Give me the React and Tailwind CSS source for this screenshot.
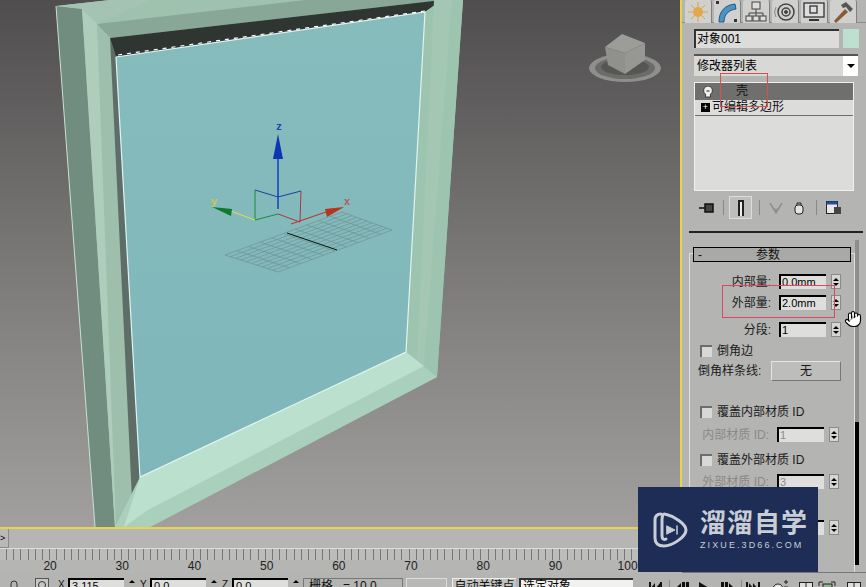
import { Hand } from 'lucide-react'

const LABELS = [20, 30, 40, 50, 60, 70, 80, 90, 100]
const TICKS = Array.from({ length: 93 })

function lerp(a, b, t) {
  return [a[0] + (b[0] - a[0]) * t, a[1] + (b[1] - a[1]) * t]
}

function GroundGrid() {
  const left = [225, 255]
  const bottom = [278, 272]
  const right = [392, 230]
  const top = [342, 212]
  const lines = []
  for (let i = 0; i <= 10; i++) {
    const a = lerp(left, bottom, i / 10)
    const b = lerp(top, right, i / 10)
    lines.push([a, b])
    const c = lerp(left, top, i / 10)
    const d = lerp(bottom, right, i / 10)
    lines.push([c, d])
  }
  return (
    <g stroke="#6f9393" strokeWidth="0.7">
      {lines.map(([a, b], i) => (
        <line key={i} x1={a[0]} y1={a[1]} x2={b[0]} y2={b[1]} />
      ))}
    </g>
  )
}

function Scene() {
  return (
    <svg viewBox="0 0 680 527" className="block w-[680px] h-[527px]">
      <defs>
        <linearGradient id="bg" x1="0" y1="0" x2="0" y2="1">
          <stop offset="0" stopColor="#4f4d4d" />
          <stop offset="0.5" stopColor="#7b7978" />
          <stop offset="1" stopColor="#a2a09e" />
        </linearGradient>
        <linearGradient id="glass" x1="0" y1="0" x2="0" y2="1">
          <stop offset="0" stopColor="#86bcbc" />
          <stop offset="1" stopColor="#7fb6ba" />
        </linearGradient>
      </defs>
      <rect width="680" height="527" fill="url(#bg)" />

      {/* frame */}
      <polygon points="56,6 82,9 115,527 95,527" fill="#718d80" />
      <polygon points="56,6 110,0 463,0 437,377 150,527 115,527 82,9" fill="#9fc2ae" />
      <polygon points="56,6 110,0 150,0 97,24 82,9" fill="#a5c3b3" />
      <polygon points="97,24 305,0 442,0 110,38" fill="#89a797" />
      <polygon points="82,9 97,24 135,527 115,527" fill="#aecdbb" />
      <polygon points="97,24 110,38 140,477 116,527" fill="#9dbfac" />
      <polygon points="110,38 116,57 140,477 132,500" fill="#5f6d68" />
      <polygon points="110,38 442,0 425,12 116,57" fill="#2f3531" />
      <polygon points="425,12 442,0 463,0 437,377 406,352" fill="#9dc4ae" />
      <polygon points="434,0 452,0 424,366 417,360" fill="#a3c7b3" />
      <polygon points="140,477 406,352 437,377 150,527 115,527" fill="#a9d0bb" />
      <polygon points="140,477 406,352 424,366 148,510 124,527" fill="#bbe0ce" />
      <polygon points="116,57 425,12 406,352 140,477" fill="url(#glass)" />
      <polyline points="116,57 425,12 406,352 140,477 116,57" fill="none" stroke="#dff4f2" strokeWidth="1.2" />
      <polyline points="56,6 95,527" fill="none" stroke="#c6e2d4" strokeWidth="1" />
      <line x1="118" y1="55" x2="425" y2="11" stroke="#fff" strokeWidth="1.2" strokeDasharray="4 5" />

      {/* grid and gizmo */}
      <GroundGrid />
      <line x1="287" y1="233" x2="337" y2="250" stroke="#111" strokeWidth="1" />
      <g fill="none" strokeWidth="1">
        <polyline points="255,190 278,197 301,191" stroke="#1b3fa0" />
        <line x1="255" y1="190" x2="255" y2="220" stroke="#1c8a3c" />
        <line x1="301" y1="191" x2="300" y2="222" stroke="#a83a40" />
        <line x1="255" y1="220" x2="278" y2="214" stroke="#1c8a3c" />
        <line x1="278" y1="214" x2="300" y2="222" stroke="#a83a40" />
        <line x1="255" y1="220" x2="228" y2="210" stroke="#d8d860" strokeWidth="1.2" />
        <line x1="291" y1="224" x2="326" y2="212" stroke="#b83a30" strokeWidth="1.2" />
        <line x1="278" y1="158" x2="278" y2="209" stroke="#1040c0" strokeWidth="1.5" />
      </g>
      <polygon points="278,134 283,159 273,159" fill="#0c36b4" />
      <polygon points="212,207 232,209 231,216" fill="#0e7a2c" />
      <polygon points="344,207 325,209 327,217" fill="#b8341f" />
      <text x="279" y="130" textAnchor="middle" fontSize="11" fontWeight="700" fill="#1a44b8" fontFamily="Liberation Sans">z</text>
      <text x="347" y="205" textAnchor="middle" fontSize="11" fontWeight="700" fill="#b85a5a" fontFamily="Liberation Sans">x</text>
      <text x="214" y="205" textAnchor="middle" fontSize="11" fontWeight="700" fill="#c8c860" fontFamily="Liberation Sans">y</text>

      {/* view cube */}
      <ellipse cx="625" cy="68" rx="36" ry="14" fill="#8f8f8c" />
      <ellipse cx="625" cy="68" rx="30" ry="11" fill="#6b6b69" />
      <ellipse cx="625" cy="67" rx="24" ry="8" fill="#565654" />
      <polygon points="622,34 645,43 625,53 605,47" fill="#9c9c98" />
      <polygon points="605,47 625,53 625,74 608,65" fill="#90908c" />
      <polygon points="625,53 645,43 645,60 625,74" fill="#979793" />
    </svg>
  )
}

function Ruler() {
  return (
    <div className="h-[44px] bg-[#b5b5b3] flex flex-col">
      <div className="h-[19px] flex">
        <div className="w-[9px] h-[19px] bg-[#b9b9b7] border-r border-b border-[#8a8a88] text-[9px] leading-[19px] text-black">&gt;</div>
      </div>
      <div className="h-[12px] border-t border-[#dededc] bg-[#bcbcba] flex pl-[6px]">
        {TICKS.map((_, i) => (
          <div key={i} className="w-[7.2px] h-[11px] shrink-0 border-l border-[#77777a]" />
        ))}
      </div>
      <div className="h-[13px] flex pl-[14px] text-[12px] leading-[13px] text-[#222]">
        {LABELS.map((n) => (
          <div key={n} className="w-[72.2px] shrink-0 text-center">{n}</div>
        ))}
      </div>
    </div>
  )
}

function TabIcon({ name }) {
  if (name === 'create') {
    return (
      <svg viewBox="0 0 22 22" className="w-[22px] h-[22px]">
        <g stroke="#d9a83c" strokeWidth="1">
          <line x1="11" y1="1" x2="11" y2="21" />
          <line x1="1" y1="11" x2="21" y2="11" />
          <line x1="4" y1="4" x2="18" y2="18" />
          <line x1="18" y1="4" x2="4" y2="18" />
        </g>
        <circle cx="11" cy="11" r="5" fill="#e2a850" />
      </svg>
    )
  }
  if (name === 'modify') {
    return (
      <svg viewBox="0 0 22 22" className="w-[22px] h-[22px]">
        <path d="M3 21 C3 10 9 4 19 3 L20 8 C13 9 8 13 8 21 Z" fill="#4b93c4" stroke="#27587c" />
        <rect x="0" y="0" width="3" height="3" fill="#333" />
        <rect x="18" y="18" width="3" height="3" fill="#333" />
      </svg>
    )
  }
  if (name === 'hierarchy') {
    return (
      <svg viewBox="0 0 22 22" className="w-[22px] h-[22px]" fill="none" stroke="#444" strokeWidth="1">
        <rect x="7" y="1" width="8" height="7" fill="#ddd" />
        <path d="M11 8v4M4 12h14M4 12v3M11 12v3M18 12v3" />
        <rect x="1" y="15" width="6" height="5" fill="#ddd" />
        <rect x="8" y="15" width="6" height="5" fill="#ddd" />
        <rect x="15" y="15" width="6" height="5" fill="#ddd" />
      </svg>
    )
  }
  if (name === 'motion') {
    return (
      <svg viewBox="0 0 22 22" className="w-[22px] h-[22px]" fill="none" stroke="#444">
        <circle cx="12" cy="11" r="8" strokeWidth="1.5" />
        <circle cx="12" cy="11" r="4" strokeWidth="1.5" />
        <circle cx="12" cy="11" r="1.5" fill="#444" />
        <path d="M2 6a10 10 0 0 0 0 10" stroke="#888" />
      </svg>
    )
  }
  if (name === 'display') {
    return (
      <svg viewBox="0 0 22 22" className="w-[22px] h-[22px]" fill="none" stroke="#333" strokeWidth="1.3">
        <rect x="1" y="2" width="20" height="14" fill="#ddd" />
        <rect x="7" y="5" width="7" height="7" />
        <path d="M6 19h10" strokeWidth="2" />
      </svg>
    )
  }
  return (
    <svg viewBox="0 0 22 22" className="w-[22px] h-[22px]">
      <path d="M2 20 L13 8 L16 11 L4 22 Z" fill="#8a5a34" />
      <path d="M9 4 L14 1 L21 8 L18 11 L14 6 L11 7 Z" fill="#555" />
    </svg>
  )
}

function Tabs() {
  return (
    <div className="h-[23px] flex gap-[2px] pl-[3px] border-b border-[#8c8c8a]">
      {['create', 'modify', 'hierarchy', 'motion', 'display', 'utility'].map((t) => (
        <div key={t} className="w-[27px] h-[23px] bg-[#d0d0ce] border-r border-[#808080] rounded-t-[2px] flex items-center justify-center">
          <TabIcon name={t} />
        </div>
      ))}
    </div>
  )
}

function Spinner() {
  return (
    <div className="w-[10px] h-[15px] flex flex-col bg-[#d6d6d4] border border-[#8a8a88] items-center justify-center gap-[2px]">
      <div className="w-0 h-0 border-x-[3px] border-x-transparent border-b-[3px] border-b-black" />
      <div className="w-0 h-0 border-x-[3px] border-x-transparent border-t-[3px] border-t-black" />
    </div>
  )
}

function NumField({ label, value, disabled, gap = 'gap-[5px]', right = 'pr-[13px]' }) {
  const labelColor = disabled ? 'text-[#8a8a88]' : 'text-[#1a1a1a]'
  const valueColor = disabled ? 'text-[#8c8c8a]' : 'text-black'
  return (
    <div className={`flex items-center justify-end ${right} ${gap} h-[15px]`}>
      <span className={`text-[12px] mr-[3px] ${labelColor}`}>{label}</span>
      <div className={`w-[47px] h-[15px] bg-[#dededc] border-t-2 border-l-2 border-t-black border-l-black pl-[1px] text-[11px] leading-[13px] ${valueColor}`}>{value}</div>
      <Spinner />
    </div>
  )
}

function CheckRow({ label }) {
  return (
    <div className="flex items-center gap-[5px] pl-[10px] h-[14px] text-[12px] text-[#1a1a1a]">
      <div className="w-[12px] h-[12px] bg-[#d8d8d6] border-t-2 border-l-2 border-[#6d6d6b]" />
      <span>{label}</span>
    </div>
  )
}

function ModifierStack() {
  return (
    <div className="mx-[12px] mt-[6px] w-[160px] h-[109px] bg-[#dcdcda] border border-[#f0f0ee] text-[12px] text-[#111]">
      <div className="h-[17px] bg-[#6f6f6d] flex items-center pl-[8px]">
        <svg viewBox="0 0 10 12" className="w-[10px] h-[12px]">
          <path d="M5 0a4.5 4.5 0 0 1 2.5 8.2V11h-5V8.2A4.5 4.5 0 0 1 5 0z" fill="#f0f0ee" stroke="#222" strokeWidth="0.8" />
          <path d="M3.5 5h3" stroke="#222" />
        </svg>
        <span className="ml-[23px] leading-[17px]">壳</span>
      </div>
      <div className="h-[16px] border-b border-[#6f6f6d] flex items-center pl-[6px]">
        <div className="w-[9px] h-[9px] bg-black text-white text-[9px] leading-[9px] text-center">+</div>
        <span className="ml-[2px] leading-[15px]">可编辑多边形</span>
      </div>
    </div>
  )
}

function StackTools() {
  return (
    <div className="h-[21px] mt-[6px] flex items-center pl-[17px]">
      <svg viewBox="0 0 16 12" className="w-[16px] h-[12px]">
        <path d="M0 6h6M6 2h8v8H6z" stroke="#111" strokeWidth="1.5" fill="#444" />
      </svg>
      <div className="w-px h-[15px] bg-[#888] ml-[8px]" />
      <div className="w-[23px] h-[23px] ml-[5px] border border-[#ddd] bg-[#bebebc] flex justify-center items-center">
        <div className="w-[6px] h-[16px] border-x-2 border-t-2 border-[#222] bg-[#eee]" />
      </div>
      <div className="w-px h-[15px] bg-[#888] ml-[7px]" />
      <svg viewBox="0 0 14 14" className="w-[14px] h-[14px] ml-[9px]" fill="none" stroke="#8f8f8d" strokeWidth="1.5">
        <path d="M1 2l6 10 6-10M4 7l3 2 3-2" />
      </svg>
      <svg viewBox="0 0 12 14" className="w-[12px] h-[14px] ml-[10px]" fill="#e4e4e2" stroke="#222">
        <rect x="2" y="4" width="8" height="9" rx="3" />
        <path d="M4 4V2h4v2" fill="none" />
      </svg>
      <div className="w-px h-[15px] bg-[#888] ml-[11px]" />
      <svg viewBox="0 0 15 14" className="w-[15px] h-[14px] ml-[9px]">
        <rect x="0.5" y="0.5" width="11" height="12" fill="#e8e8e6" stroke="#223" />
        <rect x="0.5" y="0.5" width="11" height="3" fill="#2a4a9c" />
        <rect x="8" y="6" width="7" height="7" fill="#444" />
      </svg>
    </div>
  )
}

function ParamsRollout() {
  return (
    <div className="relative mt-[20px] ml-[7px] w-[166px] h-[330px] border-l border-t border-r border-[#e0e0de]">
      <div className="ml-[3px] -mt-[7px] w-[158px] h-[15px] border border-black bg-[#a9a9a7] flex items-center text-[12px] text-[#111]">
        <span className="pl-[4px] w-[50px]">-</span>
        <span className="ml-[12px]">参数</span>
      </div>
      <div className="mt-[12px]"><NumField label="内部量:" value="0.0mm" /></div>
      <div className="mt-[6px]"><NumField label="外部量:" value="2.0mm" /></div>
      <div className="mt-[12px]"><NumField label="分段:" value="1" /></div>
      <div className="mt-[7px]"><CheckRow label="倒角边" /></div>
      <div className="mt-[2px] flex items-center pl-[8px] h-[21px] text-[12px] text-[#1a1a1a]">
        <span className="w-[73px]">倒角样条线:</span>
        <div className="w-[70px] h-[20px] bg-[#bdbdbb] border border-t-[#e4e4e2] border-l-[#e4e4e2] border-r-[#777] border-b-[#777] text-center leading-[18px]">无</div>
      </div>
      <div className="mt-[24px]"><CheckRow label="覆盖内部材质 ID" /></div>
      <div className="mt-[8px]"><NumField label="内部材质 ID:" value="1" disabled right="pr-[15px]" /></div>
      <div className="mt-[11px]"><CheckRow label="覆盖外部材质 ID" /></div>
      <div className="mt-[7px]"><NumField label="外部材质 ID:" value="3" disabled right="pr-[15px]" /></div>
      <div className="mt-[31px]"><NumField label="" value="" right="pr-[15px]" /></div>
    </div>
  )
}

function Sidebar() {
  return (
    <div className="relative w-[184px] h-[573px] bg-[#b4b4b2] overflow-hidden border-b border-[#777]">
      <Tabs />
      <div className="flex items-center pl-[12px] mt-[6px] gap-[4px]">
        <div className="w-[145px] h-[19px] bg-[#dcdcda] border-t-2 border-l-2 border-t-[#333] border-l-[#333] text-[12px] leading-[16px] pl-[1px] text-black">对象001</div>
        <div className="w-[16px] h-[19px] bg-[#bfe0d0]" />
      </div>
      <div className="flex mt-[6px] ml-[12px] w-[164px] h-[22px] bg-[#d8d8d6] border-t-2 border-[#555]">
        <div className="flex-1 text-[12px] leading-[20px] pl-[3px] text-black">修改器列表</div>
        <div className="w-[15px] bg-white flex items-center justify-center">
          <div className="w-0 h-0 border-x-[4px] border-x-transparent border-t-[4px] border-t-black" />
        </div>
      </div>
      <ModifierStack />
      <StackTools />
      <div className="mt-[13px] ml-[7px] w-[174px] h-[2px] bg-[#222]" />
      <ParamsRollout />
      {/* scrollbar */}
      <div className="absolute left-[173px] top-[240px] w-[4px] h-[325px] flex flex-col">
        <div className="h-[182px] bg-[#8e8e8c]" />
        <div className="flex-1 bg-black" />
      </div>
    </div>
  )
}

function Transport() {
  return (
    <svg viewBox="0 0 218 14" className="w-[218px] h-[14px] ml-[14px] mt-[6px] shrink-0">
      <g fill="#111">
        <path d="M2 3h2v11H2zM13 3h2v11h-2zM4 9l4-5v10zM9 9l4-5v10z" />
        <rect x="22" y="1" width="1" height="13" fill="#888" />
        <path d="M29 9l5-5v10zM35 3h3v11h-3zM39 3h3v11h-3z" />
        <path d="M52 3l10 6-10 6z" />
        <path d="M74 3h3v11h-3zM78 3h3v11h-3zM82 4l5 5-5 5z" />
        <rect x="94" y="1" width="1" height="13" fill="#888" />
        <path d="M99 3h2v11h-2zM111 3h2v11h-2zM102 4l4 5-4 5zM106 4l4 5-4 5z" />
      </g>
      <g fill="none" stroke="#222">
        <circle cx="131" cy="10" r="5" fill="#e6e6e4" />
        <path d="M137 3h4M139 1v4M137 8h4" />
        <rect x="152.5" y="3.5" width="13" height="11" fill="#dededc" />
        <path d="M159 3v11" />
        <path d="M172 7V3h4M184 3h4v4" />
        <rect x="176" y="5" width="9" height="8" fill="#8db58f" />
        <rect x="200.5" y="3.5" width="13" height="11" fill="#dededc" />
        <path d="M207 3v11" />
      </g>
    </svg>
  )
}

function CoordField({ label, value }) {
  return (
    <div className="flex items-start shrink-0">
      <span className="w-[10px] text-[10px] leading-[14px] text-[#111]">{label}</span>
      <div className="w-[56px] h-[14px] bg-[#dededc] border-t-2 border-l-2 border-t-black border-l-black text-[11px] leading-[13px] pl-[2px] text-black">{value}</div>
      <div className="w-[9px] ml-[3px] mt-[2px] flex justify-center">
        <div className="w-0 h-0 border-x-[3px] border-x-transparent border-b-[3px] border-b-black" />
      </div>
    </div>
  )
}

function StatusBar() {
  return (
    <div className="h-[14px] bg-[#b4b4b2] flex items-start overflow-hidden text-[12px] leading-[14px] text-[#111]">
      <svg viewBox="0 0 10 14" className="w-[10px] h-[14px] ml-[9px] mt-[5px] shrink-0" fill="none" stroke="#333">
        <rect x="2" y="3" width="6" height="10" rx="3" />
      </svg>
      <div className="ml-[16px] mt-[5px] w-[14px] h-[14px] shrink-0 border border-[#555] bg-[#c6c6c4] flex justify-center pt-[2px]">
        <div className="w-[8px] h-[8px] rounded-full border border-[#333]" />
      </div>
      <div className="ml-[9px] mt-[5px] flex gap-[4px]">
        <CoordField label="X" value="3.115" />
        <CoordField label="Y" value="0.0" />
        <CoordField label="Z" value="0.0" />
      </div>
      <div className="ml-[3px] mt-[5px] w-[100px] h-[14px] border border-[#777] bg-[#b4b4b2] pl-[5px] shrink-0 whitespace-pre">栅格   = 10.0</div>
      <div className="ml-[3px] mt-[5px] w-[41px] h-[14px] border border-[#ddd] bg-[#b8b8b6] shrink-0" />
      <div className="ml-[5px] mt-[5px] w-[64px] h-[14px] bg-[#c2c2c0] border-l border-t border-[#eee] text-center shrink-0">自动关键点</div>
      <div className="ml-[3px] mt-[5px] w-[114px] h-[14px] bg-[#f1f1ef] border-t-2 border-l-2 border-t-[#333] border-l-[#333] pl-[2px] leading-[13px] text-black shrink-0">选定对象</div>
      <Transport />
    </div>
  )
}

function Watermark() {
  return (
    <div className="absolute left-[638px] top-[487px] w-[180px] h-[85px] bg-[#1d2d55] flex items-center pl-[14px]">
      <svg viewBox="0 0 36 38" className="w-[36px] h-[38px] shrink-0" fill="none" stroke="#c8cdd6" strokeWidth="3" strokeLinecap="round" strokeLinejoin="round">
        <path d="M9 3 C5 3 3 5 3 9 V27 C3 33 7 35 12 35 C20 35 34 26 34 19 C34 13 22 5 13 3 C11 2.5 10 5 10 9 V25 C10 28 12 29 14 28" />
        <path d="M15 15 L23 19 L15 23 Z" fill="#c8cdd6" strokeWidth="1" />
        <path d="M25 15 V23" strokeWidth="1.5" />
      </svg>
      <div className="ml-[12px] text-[#c8cdd6]">
        <div className="text-[26px] leading-[30px] font-bold tracking-[1px] whitespace-nowrap">溜溜自学</div>
        <div className="text-[9px] leading-[12px] mt-[1px] tracking-[2.1px] whitespace-nowrap">ZIXUE.3D66.COM</div>
      </div>
    </div>
  )
}

export default function App() {
  return (
    <div className="relative w-[866px] h-[587px] overflow-hidden bg-[#b4b4b2] font-['Liberation_Sans','Noto_Sans_CJK_SC',sans-serif]">
      <div className="flex h-[573px]">
        <div className="w-[682px] shrink-0">
          <div className="w-[682px] h-[529px] border-r-2 border-b-2 border-[#e8d44a]">
            <Scene />
          </div>
          <Ruler />
        </div>
        <Sidebar />
      </div>
      <StatusBar />

      {/* annotations */}
      <div className="absolute left-[720px] top-[73px] w-[48px] h-[34px] border border-[#d4524e]" />
      <div className="absolute left-[722px] top-[285px] w-[113px] h-[33px] border border-[#d84a64]" />
      <Hand className="absolute left-[844px] top-[310px] w-[18px] h-[18px] fill-white stroke-black" strokeWidth={1.5} />
      <Watermark />
    </div>
  )
}
